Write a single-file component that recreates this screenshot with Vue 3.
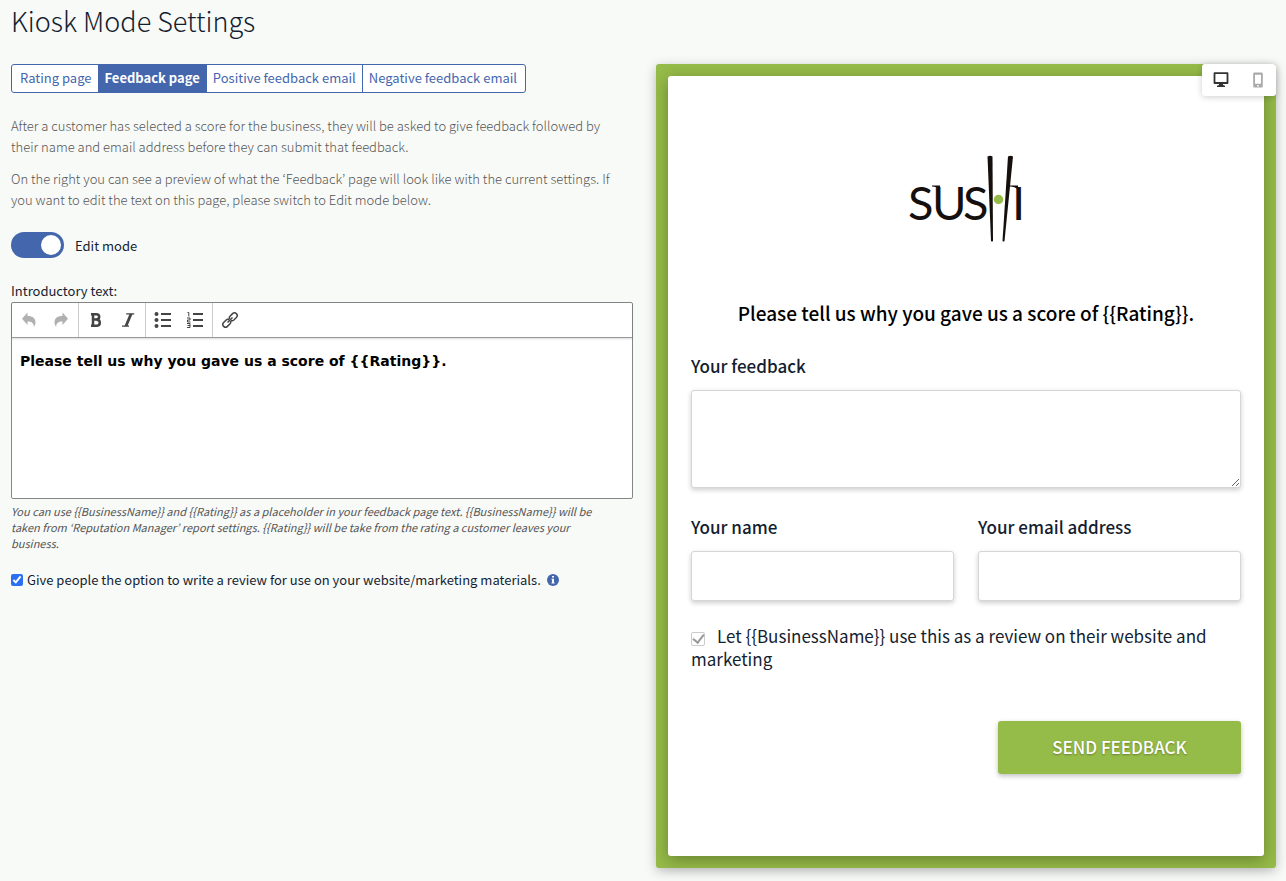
<script setup>
import { ref } from 'vue'

const tabs = ['Rating page', 'Feedback page', 'Positive feedback email', 'Negative feedback email']
const activeTab = ref('Feedback page')
const editMode = ref(true)
const allowReview = ref(true)
const device = ref('desktop')

const introText = ref('Please tell us why you gave us a score of {{Rating}}.')
const hint =
    'You can use {{BusinessName}} and {{Rating}} as a placeholder in your feedback page text. {{BusinessName}} will be taken from ‘Reputation Manager’ report settings. {{Rating}} will be take from the rating a customer leaves your business.'
const consent = 'Let {{BusinessName}} use this as a review on their website and marketing'
</script>

<template>
    <main class="page">
        <h1 class="title">Kiosk Mode Settings</h1>

        <div class="columns">
            <section class="settings">
                <nav class="tabs">
                    <button
                        v-for="tab in tabs"
                        :key="tab"
                        type="button"
                        class="tab"
                        :class="{ active: tab === activeTab }"
                        @click="activeTab = tab"
                    >
                        {{ tab }}
                    </button>
                </nav>

                <p class="intro">
                    After a customer has selected a score for the business, they will be asked to give feedback
                    followed by their name and email address before they can submit that feedback.
                </p>
                <p class="intro">
                    On the right you can see a preview of what the ‘Feedback’ page will look like with the current
                    settings. If you want to edit the text on this page, please switch to Edit mode below.
                </p>

                <label class="switch">
                    <input v-model="editMode" type="checkbox" />
                    <span>Edit mode</span>
                </label>

                <label class="editor-label" for="intro-text">Introductory text:</label>
                <div class="editor">
                    <div class="toolbar">
                        <div class="group">
                            <button type="button" class="tool" aria-label="Undo" disabled>
                                <svg width="16" height="16" viewBox="0 0 16 16">
                                    <path d="M6.5 .5v3.500c5.500 0 8 2.600 8 6.300 0 1.800-.6 3.200-1.700 4.700.2-3.600-1.800-5.500-6.300-5.500v3.500L1 6.700z" fill="currentColor" />
                                </svg>
                            </button>
                            <button type="button" class="tool" aria-label="Redo" disabled>
                                <svg width="16" height="16" viewBox="0 0 16 16">
                                    <path d="M9.500 .5v3.500c-5.500 0-8 2.600-8 6.300 0 1.800.6 3.200 1.700 4.700-.2-3.600 1.800-5.500 6.300-5.500v3.500L15 6.700z" fill="currentColor" />
                                </svg>
                            </button>
                        </div>
                        <div class="group">
                            <button type="button" class="tool" aria-label="Bold">
                                <svg width="16" height="16" viewBox="0 0 16 16">
                                    <path d="M3 2.200h5.300c1.900 0 2.900 1 2.900 2.600s-1 2.700-2.900 2.700H5M8.500 7.800c2.200 0 3.300 1.100 3.300 2.900s-1.300 3.100-3.400 3.100H3M5 2v12" fill="none" stroke="currentColor" stroke-width="2.500" />
                                </svg>
                            </button>
                            <button type="button" class="tool" aria-label="Italic">
                                <svg width="16" height="16" viewBox="0 0 16 16">
                                    <path d="M6.200 1.800h8M2 14.200h7" stroke="currentColor" stroke-width="1.300" />
                                    <path d="M9.500 2h3L7.500 14h-3z" fill="currentColor" />
                                </svg>
                            </button>
                        </div>
                        <div class="group">
                            <button type="button" class="tool" aria-label="Bullet list">
                                <svg width="18" height="16" viewBox="0 0 18 16">
                                    <g fill="currentColor">
                                        <circle cx="2.500" cy="2" r="2" />
                                        <circle cx="2.500" cy="8" r="2" />
                                        <circle cx="2.500" cy="14" r="2" />
                                        <path d="M7 1h10v2H7zM7 7h10v2H7zM7 13h10v2H7z" />
                                    </g>
                                </svg>
                            </button>
                            <button type="button" class="tool" aria-label="Numbered list">
                                <svg width="18" height="16" viewBox="0 0 18 16">
                                    <path d="M7 1h10v2H7zM7 7h10v2H7zM7 13h10v2H7z" fill="currentColor" />
                                    <path d="M1.500.5h1.300v4M1 6h3v2H1.500v2H4.500M1 11.500h3v4H1M1.500 13.500H4" fill="none" stroke="currentColor" />
                                </svg>
                            </button>
                        </div>
                        <div class="group">
                            <button type="button" class="tool" aria-label="Insert link">
                                <svg width="18" height="18" viewBox="0 0 18 18">
                                    <g transform="rotate(-45 9 9)" fill="none" stroke="currentColor" stroke-width="1.500">
                                        <path d="M8.700 10A2.700 2.700 0 0 1 6.300 11.700H2.700a2.700 2.700 0 0 1 0-5.400h3.600A2.700 2.700 0 0 1 8.700 8" />
                                        <path d="M9.300 8A2.700 2.700 0 0 1 11.700 6.300h3.600a2.700 2.700 0 0 1 0 5.400h-3.600A2.700 2.700 0 0 1 9.300 10" />
                                        <path d="M5.500 9h7" />
                                    </g>
                                </svg>
                            </button>
                        </div>
                    </div>
                    <textarea id="intro-text" v-model="introText" class="editor-body"></textarea>
                </div>
                <p class="hint">{{ hint }}</p>

                <div class="option">
                    <input id="allow-review" v-model="allowReview" type="checkbox" class="check" />
                    <label for="allow-review">
                        Give people the option to write a review for use on your website/marketing materials.
                    </label>
                    <svg class="info" width="12" height="12" viewBox="0 0 12 12">
                        <circle cx="6" cy="6" r="6" fill="#4466ad" />
                        <path d="M5 2h2v1.600H5zM4.500 4.800H7V8.500h.6v1H4.500v-1H5V5.800h-.5z" fill="#fff" />
                    </svg>
                </div>
            </section>

            <section class="preview">
                <div class="devices">
                    <button type="button" aria-label="Desktop" :class="{ on: device === 'desktop' }" @click="device = 'desktop'">
                        <svg width="16" height="16" viewBox="0 0 16 16">
                            <path d="M1.500 1.200h13v9.800h-13z" fill="none" stroke="currentColor" stroke-width="1.800" stroke-linejoin="round" />
                            <path d="M6 11.500h4v1.500l2 .8V15H4v-1.200l2-.8z" fill="currentColor" />
                        </svg>
                    </button>
                    <button type="button" aria-label="Mobile" :class="{ on: device === 'mobile' }" @click="device = 'mobile'">
                        <svg width="10" height="16" viewBox="0 0 10 16">
                            <path d="M1.500.5h7a1.300 1.300 0 0 1 1.300 1.300v12.400a1.300 1.300 0 0 1-1.300 1.300h-7a1.300 1.300 0 0 1-1.300-1.300v-12.400a1.300 1.300 0 0 1 1.300-1.300zM2 2.800v9h6v-9zM4.200 13v1.500h1.600V13z" fill="currentColor" fill-rule="evenodd" />
                        </svg>
                    </button>
                </div>

                <form class="card" @submit.prevent>
                    <svg class="logo" width="130" height="90" viewBox="-5 0 130 90">
                        <text class="logo-text" x="2 26 57 106" y="67">SUSI</text>
                        <path d="M26 32.500h8v4c-2-2-5-2.800-8-3zM104 32.500h8v4c-2-2-5-2.800-8-3z" fill="#15100d" />
                        <path d="M81.500 3.500q2.700-1.300 5 0L87 88q-1 1-2 0z" fill="#15100d" />
                        <path d="M102 3.500q2.700-1.300 5 0L98.500 88q-1 1-2 0z" fill="#15100d" />
                        <circle cx="92.500" cy="46.500" r="4.700" fill="#95bb48" />
                    </svg>
                    <h2>{{ introText }}</h2>

                    <div class="field">
                        <label for="feedback">Your feedback</label>
                        <textarea id="feedback"></textarea>
                    </div>

                    <div class="pair">
                        <div class="field">
                            <label for="name">Your name</label>
                            <input id="name" type="text" />
                        </div>
                        <div class="field">
                            <label for="email">Your email address</label>
                            <input id="email" type="email" />
                        </div>
                    </div>

                    <div class="consent">
                        <input id="consent" type="checkbox" checked disabled />
                        <label for="consent">{{ consent }}</label>
                    </div>

                    <button type="submit" class="send">SEND FEEDBACK</button>
                </form>
            </section>
        </div>
    </main>
</template>

<style>
body {
    background: #f8faf8;
}
</style>

<style scoped>
.page {
    padding: 3px 10px 13px 11px;
    color: #141e30;
    font-family: "Noto Sans CJK KR", "Open Sans", sans-serif;
    font-size: 13px;
}

.page * {
    box-sizing: border-box;
}

button,
input,
textarea {
    margin: 0;
    font-family: inherit;
}

.title {
    margin: 0 0 25px;
    font-size: 27px;
    font-weight: 300;
    line-height: 36px;
}

.columns {
    display: grid;
    grid-template-columns: minmax(0, 622fr) minmax(0, 620fr);
    gap: 23px;
    align-items: start;
}

.tabs {
    display: flex;
    width: fit-content;
    margin-bottom: 22px;
    border: 1px solid #4466ad;
    border-radius: 3px;
    background: #fff;
}

.tab {
    height: 27px;
    padding: 0 6px 2px;
    border: 0;
    border-left: 1px solid #4466ad;
    background: none;
    color: #4466ad;
    font-size: 13px;
    line-height: 25px;
}

.tab:first-child {
    border-left: 0;
    padding-left: 8px;
}

.tab:last-child {
    padding-right: 8px;
}

.tab.active {
    background: #4466ad;
    color: #fff;
    font-weight: 700;
}

.intro {
    max-width: 612px;
    margin: 0 0 11px;
    color: #555;
    font-size: 13px;
    font-weight: 300;
    line-height: 21px;
}

.switch {
    display: flex;
    align-items: center;
    gap: 11px;
    width: fit-content;
    margin: 22px 0 24px;
}

.switch input {
    display: flex;
    align-items: center;
    justify-content: flex-end;
    appearance: none;
    width: 53px;
    height: 26px;
    padding: 3px;
    border-radius: 13px;
    background: #4466ad;
}

.switch input::before {
    content: "";
    width: 20px;
    height: 20px;
    border-radius: 50%;
    background: #fff;
}

.switch input:not(:checked) {
    justify-content: flex-start;
    background: #b4b9c2;
}

.editor-label {
    display: block;
    margin-bottom: 2px;
    line-height: 18px;
}

.editor {
    border: 1px solid #858688;
    border-radius: 2px;
    background: #fff;
}

.toolbar {
    display: flex;
    border-bottom: 1px solid #999;
    box-shadow: 0 1px 2px rgba(0, 0, 0, 0.15);
}

.group {
    display: flex;
    padding: 0 1px;
    border-right: 1px solid #ccc;
}

.group:last-child {
    border-right: 0;
}

.tool {
    display: flex;
    align-items: center;
    justify-content: center;
    width: 32px;
    height: 34px;
    padding: 0;
    border: 0;
    background: none;
    color: #444;
}

.tool:disabled {
    color: #b0b0b0;
}

.editor-body {
    display: block;
    width: 100%;
    height: 160px;
    padding: 13px 8px;
    border: 0;
    outline: 0;
    resize: none;
    background: none;
    color: #000;
    font: bold 14px/20px Verdana, "DejaVu Sans", sans-serif;
}

.hint {
    max-width: 600px;
    margin: 4px 0 20px;
    color: #555;
    font-size: 11px;
    font-style: italic;
    line-height: 16px;
}

.option {
    display: flex;
    align-items: center;
    gap: 4px;
    line-height: 18px;
}

.check {
    width: 12px;
    height: 12px;
    flex: none;
    accent-color: #2b6ff5;
}

.info {
    margin-left: 2px;
}

.preview {
    position: relative;
    padding: 12px;
    border-radius: 3px;
    background: #95bb48;
    box-shadow: 0 3px 12px rgba(0, 0, 0, 0.25);
}

.devices {
    position: absolute;
    top: 0;
    right: 0;
    display: flex;
    width: 74px;
    height: 32px;
    border-radius: 3px;
    background: #fff;
    box-shadow: 0 1px 6px rgba(0, 0, 0, 0.2);
}

.devices button {
    display: flex;
    flex: 1;
    align-items: center;
    justify-content: center;
    padding: 0;
    border: 0;
    background: none;
    color: #aaa;
}

.devices button.on {
    color: #333;
}

.card {
    padding: 77px 23px 82px;
    border-radius: 3px;
    background: #fff;
    box-shadow: 0 4px 16px rgba(0, 0, 0, 0.3);
}

.logo {
    display: block;
    margin: 0 auto 56px;
}

.logo-text {
    fill: #15100d;
    font-family: Lato, sans-serif;
    font-size: 47px;
}

.card h2 {
    margin: 0 0 27px;
    color: #000;
    font-size: 19px;
    font-weight: 500;
    line-height: 28px;
    text-align: center;
}

.field {
    display: flex;
    flex: 1;
    flex-direction: column;
    gap: 12px;
    min-width: 0;
}

.field label {
    font-size: 17px;
    font-weight: 500;
    line-height: 24px;
}

.field input,
.field textarea {
    width: 100%;
    height: 50px;
    padding: 8px;
    border: 1px solid #d6d6d6;
    border-radius: 3px;
    background: #fff;
    box-shadow: 0 2px 5px rgba(0, 0, 0, 0.2);
    font-size: 17px;
}

.field textarea {
    height: 98px;
}

.pair {
    display: flex;
    gap: 24px;
    margin: 27px 0 23px;
}

.consent {
    font-size: 17px;
    line-height: 23px;
}

.consent input {
    display: inline-grid;
    place-items: center;
    appearance: none;
    width: 14px;
    height: 14px;
    margin-right: 12px;
    border: 1px solid #ccc;
    border-radius: 2px;
    background: #fff;
    vertical-align: -1px;
}

.consent input:checked::before {
    content: "";
    width: 5px;
    height: 9px;
    border: solid #999;
    border-width: 0 2px 2px 0;
    transform: translateY(-1px) rotate(38deg);
}

.send {
    display: block;
    width: 243px;
    height: 53px;
    margin: 51px 0 0 auto;
    padding: 0 0 2px;
    border: 0;
    border-radius: 3px;
    background: #95bb48;
    box-shadow: 0 2px 5px rgba(0, 0, 0, 0.25);
    color: #fff;
    font-size: 17px;
    font-weight: 500;
    text-shadow: 0 1px 2px rgba(0, 0, 0, 0.3);
}
</style>
